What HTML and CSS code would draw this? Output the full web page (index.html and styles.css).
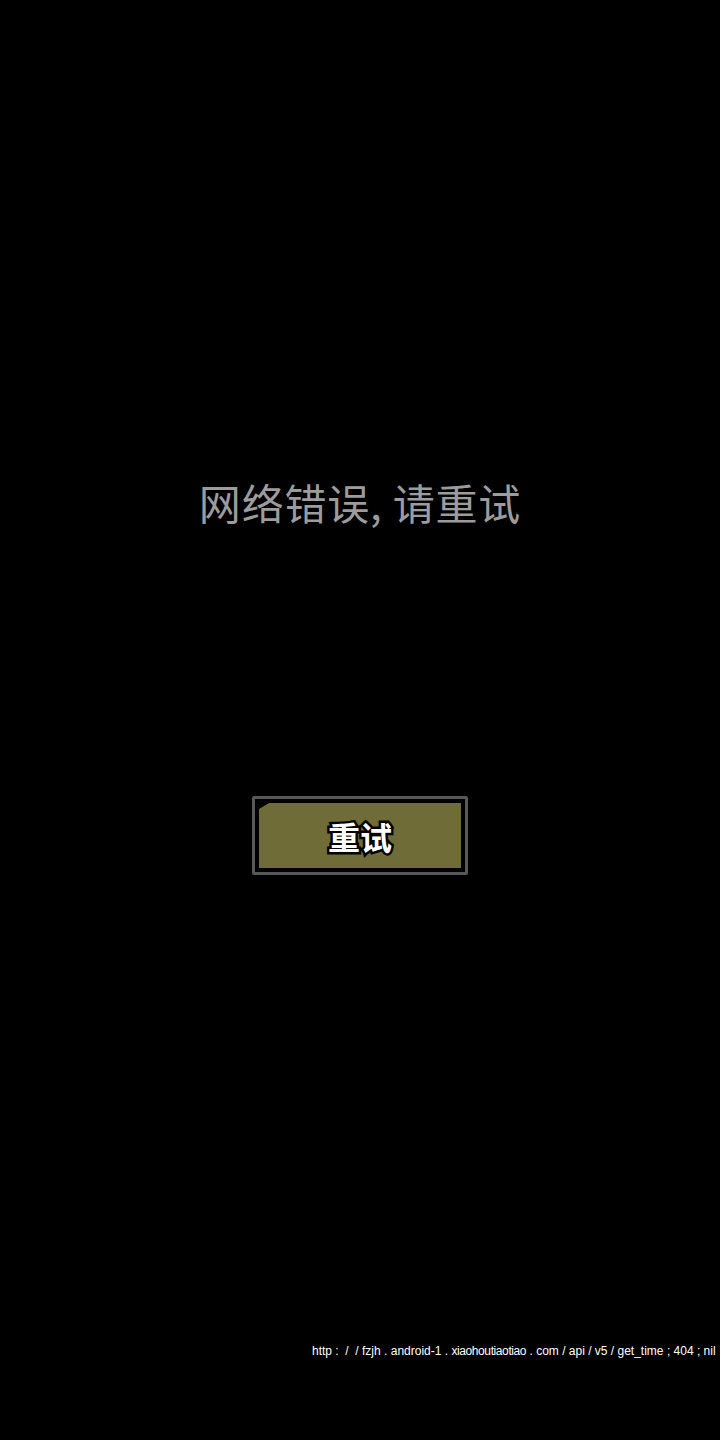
FILE: index.html
```html
<!DOCTYPE html>
<html lang="zh-CN">
<head>
<meta charset="utf-8">
<title>网络错误</title>
<link rel="stylesheet" href="styles.css">
</head>
<body>
<div class="screen">
  <div class="message">网络错误, 请重试</div>
  <button class="retry" type="button"><span class="retry-face"><span class="retry-label">重试</span></span></button>
  <div class="debug">http<span class="p">:</span><span class="p">/</span><span class="p">/</span>fzjh<span class="p">.</span>android-1<span class="p">.</span><span class="tight">xiaohoutiaotiao</span><span class="p">.</span>com<span class="p">/</span>api<span class="p">/</span>v5<span class="p">/</span>get_time<span class="p">;</span>404<span class="p">;</span>nil</div>
</div>
</body>
</html>
```

FILE: styles.css
```css
html, body {
  margin: 0;
  padding: 0;
  background: #000;
}

.screen {
  width: 720px;
  height: 1440px;
  overflow: hidden;
  display: flex;
  flex-direction: column;
  align-items: center;
  font-family: "Noto Sans CJK SC", "Noto Sans", sans-serif;
}

.message {
  margin-top: 481px;
  font-size: 42px;
  line-height: 42px;
  letter-spacing: 0.8px;
  color: #9c9c9c;
  white-space: nowrap;
}

.retry {
  margin-top: 273px;
  width: 216px;
  height: 79px;
  padding: 4px;
  border: 3px solid #585858;
  border-radius: 2px;
  background: #000;
  box-sizing: border-box;
  cursor: pointer;
  display: flex;
}

.retry-face {
  flex: 1;
  background: #6f6c37;
  clip-path: polygon(10px 0, 100% 0, 100% 100%, 0 100%, 0 6px);
  display: flex;
  align-items: center;
  justify-content: center;
}

.retry-label {
  font-family: "Noto Sans CJK SC", sans-serif;
  font-weight: 700;
  font-size: 32px;
  line-height: 32px;
  color: #fff;
  -webkit-text-stroke: 5px #000;
  paint-order: stroke fill;
}

.debug {
  align-self: flex-start;
  margin-top: 469px;
  margin-left: 312px;
  font-family: "Liberation Sans", Arial, sans-serif;
  font-size: 12px;
  line-height: 15px;
  color: #fff;
  white-space: nowrap;
}

.debug .p {
  display: inline-block;
  width: 10px;
  text-align: center;
}

.debug .tight {
  letter-spacing: -0.4px;
}
```
